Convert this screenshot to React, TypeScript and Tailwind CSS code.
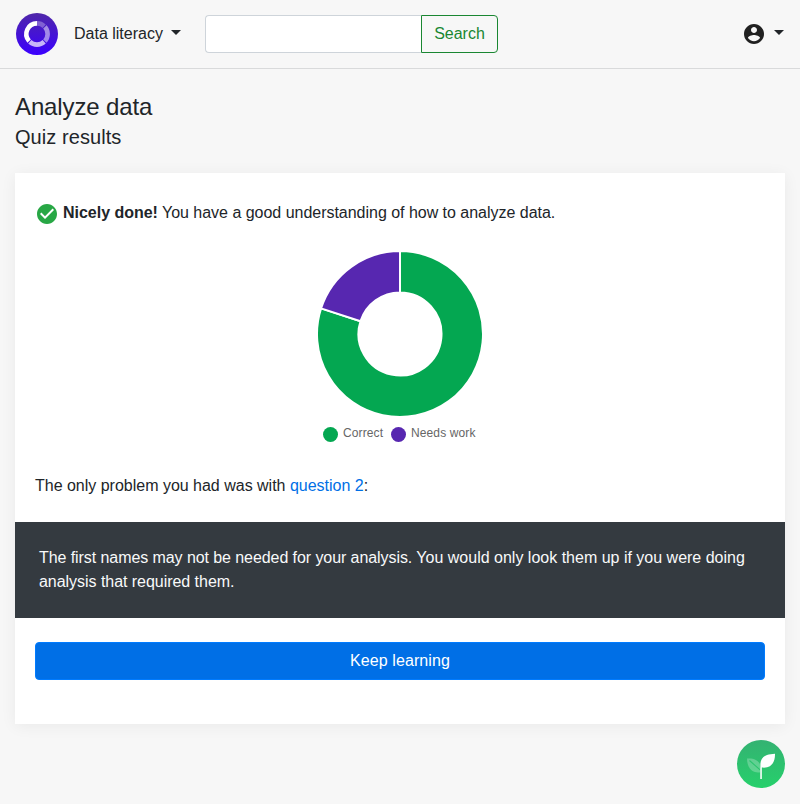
function Caret() {
  return (
    <span className="mb-[3px] inline-block border-x-[5px] border-t-[5px] border-x-transparent border-t-[#212529]" />
  );
}

function Logo() {
  return (
    <svg width="42" height="42" viewBox="0 0 42 42" className="shrink-0">
      <defs>
        <linearGradient id="logo-fill" x1="0" y1="0" x2="0" y2="1">
          <stop offset="0" stopColor="#4f27a8" />
          <stop offset="1" stopColor="#3b00ff" />
        </linearGradient>
      </defs>
      <circle cx="21" cy="21" r="21" fill="url(#logo-fill)" />
      <g fill="none" stroke="#fff" strokeWidth="4.6">
        <path d="M21 10.4A10.6 10.6 0 0 0 13.1 28.1" />
        <path d="M21 10.4A10.6 10.6 0 0 1 28.2 13.2" opacity=".3" />
        <path d="M28.9 13.9A10.6 10.6 0 0 1 28.9 28.1" opacity=".5" />
        <path d="M28.2 28.8A10.6 10.6 0 0 1 13.8 28.8" opacity=".7" />
      </g>
    </svg>
  );
}

function Sprout() {
  return (
    <svg width="48" height="48" viewBox="0 0 48 48">
      <defs>
        <linearGradient id="sprout-fill" x1="0" y1="0" x2="0" y2="1">
          <stop offset="0" stopColor="#34b272" />
          <stop offset="1" stopColor="#26d06b" />
        </linearGradient>
      </defs>
      <circle cx="24" cy="24" r="24" fill="url(#sprout-fill)" />
      <path
        d="M10 18.5C17 17.8 23.3 20.5 23.4 27V32.2C15.5 33.4 10.2 28.5 10 18.5Z"
        fill="#fff"
        opacity=".25"
      />
      <path d="M12.5 20.5L23.4 30.2" stroke="#2bc46e" strokeWidth="1.1" />
      <path
        d="M23.4 39V24.5C23.4 17 29 14.2 38 13.8C38.2 22 34.5 28.6 25 27.6V39Z"
        fill="#fff"
      />
      <path d="M23.4 27.5H25V39H23.4Z" fill="#d9f5e5" />
    </svg>
  );
}

function ResultsChart() {
  return (
    <svg width="168" height="168" viewBox="-84 -84 168 168" className="mx-auto block">
      <g stroke="#fff" strokeWidth="2">
        <path
          d="M0-83A83 83 0 1 1-78.938-25.648L-39.469-12.824A41.5 41.5 0 1 0 0-41.5Z"
          fill="#04a751"
        />
        <path
          d="M-78.938-25.648A83 83 0 0 1 0-83V-41.5A41.5 41.5 0 0 0-39.469-12.824Z"
          fill="#5727b0"
        />
      </g>
    </svg>
  );
}

export default function App() {
  return (
    <div className="flex min-h-[804px] flex-col bg-[#f7f7f7] font-['Liberation_Sans',Arial,sans-serif] text-base text-[#212529]">
      <header className="flex h-[69px] items-center border-b border-[#d9dadb] px-4">
        <Logo />
        <button className="ml-4 flex w-[107px] items-center justify-between">
          Data literacy <Caret />
        </button>
        <form className="ml-6 flex h-[38px]">
          <input className="w-[216px] rounded-l border border-r-0 border-[#ced4da] bg-white px-3 outline-none" />
          <button
            type="button"
            className="w-[77px] rounded-r border border-[#1a8732] text-center text-[#1a8732]"
          >
            Search
          </button>
        </form>
        <button className="ml-auto flex items-center gap-2">
          <svg width="24" height="24" viewBox="0 0 24 24" fill="#212121">
            <path d="M12 2C6.48 2 2 6.48 2 12s4.48 10 10 10 10-4.48 10-10S17.52 2 12 2zm0 3c1.66 0 3 1.34 3 3s-1.34 3-3 3-3-1.34-3-3 1.34-3 3-3zm0 14.2c-2.5 0-4.71-1.28-6-3.22.03-1.99 4-3.08 6-3.08 1.99 0 5.97 1.09 6 3.08-1.29 1.94-3.5 3.22-6 3.22z" />
          </svg>
          <Caret />
        </button>
      </header>

      <main className="px-[15px] pt-[23px]">
        <h1 className="text-[24px] leading-[29px] tracking-[-0.12px]">Analyze data</h1>
        <h2 className="mt-1 text-[20px] leading-6 tracking-[0.06px]">Quiz results</h2>

        <section className="mt-6 h-[551px] bg-white pt-7 shadow-[0_2px_15px_rgba(0,0,0,0.06)]">
          <p className="flex items-center px-5">
            <svg width="24" height="24" viewBox="0 0 24 24" fill="#28a745" className="relative top-px mr-1">
              <path d="M12 2C6.48 2 2 6.48 2 12s4.48 10 10 10 10-4.48 10-10S17.52 2 12 2zm-2 15l-5-5 1.41-1.41L10 14.17l7.59-7.59L19 8l-9 9z" />
            </svg>
            <span className="tracking-[-0.022px]">
              <b>Nicely done!</b> You have a good understanding of how to analyze data.
            </span>
          </p>

          <div className="mt-[25px]">
            <ResultsChart />
            <div className="mt-2 flex h-4 items-center pl-[308px] text-[12px] leading-4 tracking-[0.12px] text-[#666]">
              <span className="flex w-[68px] items-center gap-[5px]">
                <i className="size-[15px] rounded-full bg-[#04a751]" />
                <span className="-mt-[3px]">Correct</span>
              </span>
              <span className="flex items-center gap-[5px]">
                <i className="size-[15px] rounded-full bg-[#5727b0]" />
                <span className="-mt-[3px]">Needs work</span>
              </span>
            </div>
          </div>

          <p className="mt-8 px-5 tracking-[-0.01px]">
            The only problem you had was with <a className="text-[#006fe6]">question 2</a>:
          </p>
          <div className="mt-6 bg-[#343a40] p-6 text-[#f8f9fa]">
            <span className="tracking-[-0.075px]">
              The first names may not be needed for your analysis.
            </span>{" "}
            <span>You would only look them up if you were doing</span>{" "}
            <span className="tracking-[-0.04px]">analysis that required them.</span>
          </div>
          <div className="px-5 pt-6">
            <button className="h-[38px] w-full rounded border border-[#007bff] bg-[#006fe6] tracking-[0.1px] text-white">
              Keep learning
            </button>
          </div>
        </section>

        <div className="mt-4 flex justify-end">
          <Sprout />
        </div>
      </main>
    </div>
  );
}
